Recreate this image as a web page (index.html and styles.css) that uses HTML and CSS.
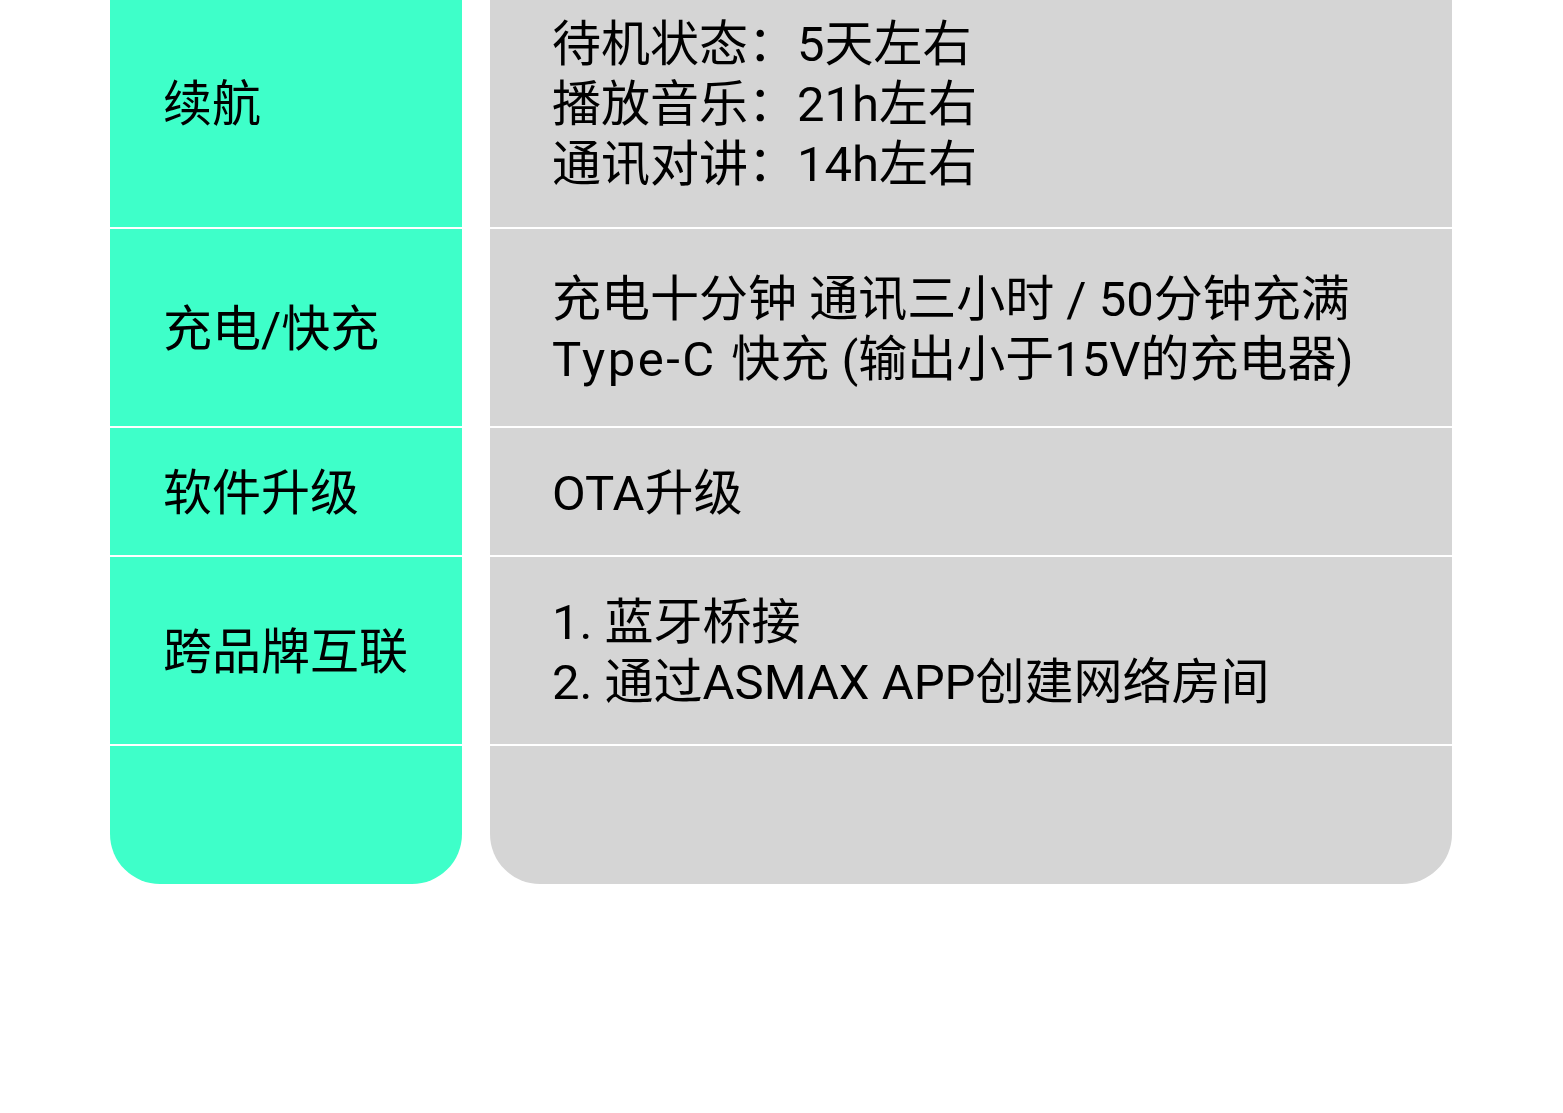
FILE: index.html
```html
<!DOCTYPE html>
<html lang="zh-CN">
<head>
<meta charset="utf-8">
<title>规格</title>
<link rel="stylesheet" href="styles.css">
</head>
<body>
<div class="spec">
  <div class="cell key r1"><p class="txt">续航</p></div>
  <div class="cell val r1"><p class="txt">待机状态：5天左右<br>播放音乐：21h左右<br>通讯对讲：14h左右</p></div>

  <div class="cell key r2"><p class="txt">充电/快充</p></div>
  <div class="cell val r2"><p class="txt">充电十分钟 通讯三小时 / 50分钟充满<br><span class="latin-wide">Type-C </span>快充 (输出小于15V的充电器)</p></div>

  <div class="cell key r3"><p class="txt">软件升级</p></div>
  <div class="cell val r3"><p class="txt">OTA升级</p></div>

  <div class="cell key r4"><p class="txt">跨品牌互联</p></div>
  <div class="cell val r4"><p class="txt">1. 蓝牙桥接<br>2. 通过ASMAX APP创建网络房间</p></div>

  <div class="cell key r5 last"></div>
  <div class="cell val r5 last"></div>
</div>
</body>
</html>
```

FILE: styles.css
```css
html, body {
  margin: 0;
  padding: 0;
  background: #ffffff;
}

body {
  width: 1563px;
  height: 1113px;
  overflow: hidden;
  font-family: Roboto, "Noto Sans CJK SC", sans-serif;
  color: #000000;
}

.spec {
  display: grid;
  grid-template-columns: 352px 962px;
  grid-template-rows: 248px 197px 127px 187px 138px;
  column-gap: 28px;
  row-gap: 2px;
  margin-top: -21px;
  margin-left: 110px;
}

.cell {
  display: flex;
  align-items: center;
  box-sizing: border-box;
  padding-top: 4px;
  font-size: 49px;
  line-height: 60px;
  white-space: nowrap;
}

.txt {
  margin: 0;
}

.key {
  background: #3effc9;
  padding-left: 53px;
}

.val {
  background: #d5d5d5;
  padding-left: 62px;
}

.latin-wide {
  letter-spacing: 2.5px;
}

.last {
  border-radius: 0 0 50px 50px;
}
```
